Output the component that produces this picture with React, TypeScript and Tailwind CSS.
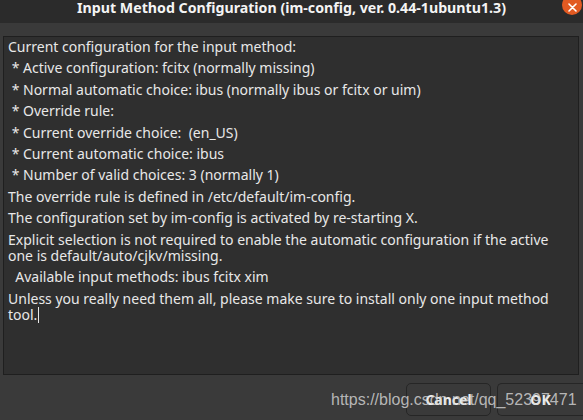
const lines: string[][] = [
  ['Current configuration for the input method:'],
  [' * Active configuration: fcitx (normally missing)'],
  [' * Normal automatic choice: ibus (normally ibus or fcitx or uim)'],
  [' * Override rule: '],
  [' * Current override choice:  (en_US)'],
  [' * Current automatic choice: ibus'],
  [' * Number of valid choices: 3 (normally 1)'],
  ['The override rule is defined in /etc/default/im-config.'],
  ['The configuration set by im-config is activated by re-starting X.'],
  [
    'Explicit selection is not required to enable the automatic configuration if the active',
    'one is default/auto/cjkv/missing.',
  ],
  ['  Available input methods: ibus fcitx xim'],
  ['Unless you really need them all, please make sure to install only one input method', 'tool.'],
]

const App = () => {
  return (
    <div className="relative w-[583px] h-[420px] overflow-hidden bg-[#3a3a3a] flex flex-col font-['Noto_Sans',sans-serif]">
      <div className="relative h-[23px] shrink-0 bg-[#2b2b2b] flex justify-center">
        <span className="mt-[-3px] text-[14.2px] font-bold leading-[21px] text-[#f4f4f4]">
          Input Method Configuration (im-config, ver. 0.44-1ubuntu1.3)
        </span>
        <div className="absolute left-[562px] top-[-5px] w-[20px] h-[20px] rounded-full bg-[#e25a22] flex items-center justify-center">
          <svg width="9" height="9" viewBox="0 0 9 9" className="mt-[4px]">
            <path d="M1 1L8 8M8 1L1 8" stroke="#fff" strokeWidth="1.6" strokeLinecap="round" />
          </svg>
        </div>
      </div>

      <div className="px-[3px] pt-[13px]">
        <div className="h-[339px] w-[576px] border border-[#1f1f1f] bg-[#2f2f2f] px-[4px] pt-[2px] text-[14px] text-[#e8e8e8]">
          {lines.map((para, i) => (
            <div key={i} className="mb-[5.2px]">
              {para.map((l, j) => (
                <div key={j} className="whitespace-pre leading-[16.2px]">
                  {l}
                  {i === lines.length - 1 && j === para.length - 1 && (
                    <span className="inline-block w-[1px] h-[16px] bg-[#e8e8e8] align-[-3px] ml-[1px]" />
                  )}
                </div>
              ))}
            </div>
          ))}
        </div>
      </div>

      <div className="flex justify-end gap-[6px] pt-[8px]">
        <button className="w-[85px] h-[33px] rounded-[5px] border border-[#262626] bg-[#3a3a3a] text-[14px] font-bold text-[#eeeeee]">
          Cancel
        </button>
        <button className="w-[86px] h-[33px] rounded-l-[5px] border border-r-0 border-[#262626] bg-[#3a3a3a] text-[14px] font-bold text-[#eeeeee]">
          OK
        </button>
      </div>

      <div className="absolute left-[331px] top-[389px] text-[16px] leading-[22px] text-[#d8d8d8]/80 font-['Liberation_Sans',sans-serif] pointer-events-none">
        https://blog.csdn.net/qq_52397471
      </div>
    </div>
  )
}

export default App
